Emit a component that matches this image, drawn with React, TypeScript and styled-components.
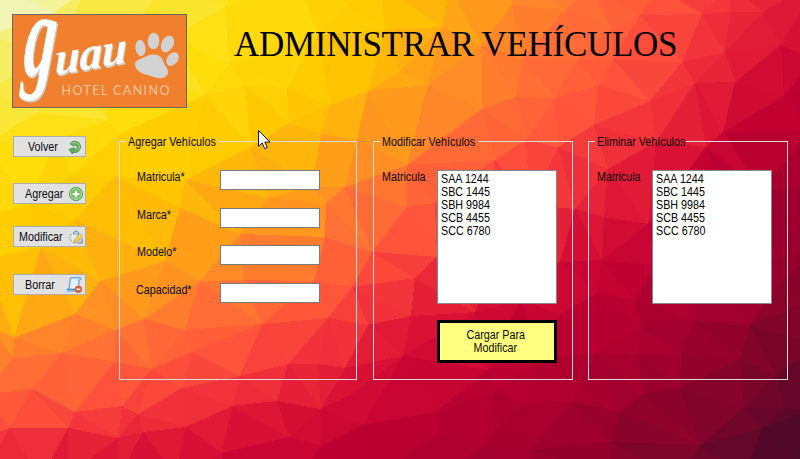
import React from 'react';
import styled, { createGlobalStyle } from 'styled-components';

const GlobalStyle = createGlobalStyle`
  * { box-sizing: border-box; }
  body { margin: 0; overflow: hidden; }
`;

/* ---------- Low-poly backdrop ---------- */

type Point = [number, number];

const POINTS: Point[] = [
  [-20, -20], [85, -10], [162, -12], [235, -15], [300, -12], [380, -15], [450, -12], [520, -20], [590, -15], [660, -12], [730, -15], [820, -20],
  [-15, 37], [-12, 90], [-15, 144], [-12, 215], [-15, 260], [-12, 325], [-15, 395], [-12, 435], [-20, 480],
  [68, 475], [40, 480], [118, 478], [175, 475], [222, 480], [300, 476], [370, 480], [440, 475], [530, 478], [610, 474], [680, 480], [745, 476], [820, 480],
  [815, 60], [812, 130], [820, 190], [815, 250], [812, 300], [820, 345], [812, 410],
  [55, 12], [60, 50], [110, 60], [172, 37], [225, 7], [205, 95], [318, 35], [229, 64], [245, 86], [287, 88], [347, 5], [330, 105], [368, 91],
  [37, 113], [107, 120], [55, 140], [120, 134], [72, 175], [115, 176], [185, 180], [289, 123], [251, 147], [321, 134], [357, 140],
  [268, 198], [312, 187], [345, 187], [326, 203], [180, 208], [325, 237], [240, 234], [30, 205], [75, 220], [400, 72], [385, 30], [442, 27],
  [512, 5], [565, 10], [612, 28], [640, 15], [702, 14], [730, 12], [763, 12], [725, 52], [781, 45], [682, 62], [695, 83], [735, 82],
  [650, 101], [599, 85], [555, 98], [516, 97], [482, 109], [428, 85], [482, 45], [522, 59], [577, 60], [613, 59],
  [594, 125], [526, 140], [495, 160], [558, 147], [706, 147], [723, 132], [784, 96], [407, 165], [608, 169], [575, 209],
  [604, 217], [648, 224], [656, 142], [407, 207], [435, 203], [500, 245], [530, 205], [760, 190], [775, 260], [730, 230], [690, 260],
  [41, 247], [100, 281], [14, 338], [13, 358], [75, 314], [62, 353], [115, 330], [144, 319], [115, 362], [152, 369], [32, 389], [75, 412],
  [122, 406], [138, 414], [118, 438], [68, 428], [10, 428], [185, 330], [192, 352], [240, 376], [182, 388], [186, 427],
  [232, 406], [143, 432], [222, 453], [288, 364], [328, 318], [277, 401], [321, 409], [352, 394], [318, 364], [345, 368], [363, 425], [321, 446],
  [289, 437], [200, 281], [165, 261], [244, 280], [262, 324], [352, 287], [368, 325], [372, 252], [314, 281],
  [437, 257], [415, 278], [411, 316], [403, 356], [436, 412], [438, 433], [496, 390], [487, 370], [524, 403], [573, 402], [620, 412],
  [642, 394], [680, 388], [700, 445], [744, 408], [762, 428], [740, 359], [681, 353], [638, 354], [641, 328], [694, 321], [597, 293], [635, 300],
  [655, 265], [595, 353], [543, 358], [485, 445], [530, 450], [610, 442], [602, 260], [560, 262], [560, 314],
  [750, 325], [785, 408], [775, 288], [775, 375], [475, 312], [520, 300],
];

const PALETTE: [number, number, number][] = [
  [240, 247, 196], [247, 236, 85], [255, 222, 12], [255, 198, 0], [255, 166, 20], [255, 138, 40], [255, 108, 54],
  [255, 82, 59], [241, 50, 59], [218, 18, 53], [192, 0, 50], [158, 0, 46], [122, 5, 42], [77, 9, 40],
];

const HEAT: number[][] = [
  [0, 1.1, 1.7, 2.2, 3.0, 4.7, 6.0, 7.6, 8.8],
  [1.2, 1.8, 2.1, 2.7, 4.0, 5.6, 6.9, 8.4, 10],
  [2.2, 2.7, 3.2, 4.0, 5.9, 7.2, 8.4, 9.7, 10.8],
  [3.0, 3.9, 4.7, 6.0, 7.7, 9.1, 9.7, 10.6, 11.5],
  [5.6, 6.3, 7.2, 8.2, 9.4, 10.1, 10.6, 11.3, 12.3],
  [8.3, 8.9, 9.4, 9.9, 10.4, 10.8, 11.4, 12.2, 13],
];

const clamp = (v: number, lo: number, hi: number) => Math.max(lo, Math.min(hi, v));

function heatAt(x: number, y: number) {
  const gx = clamp(x / 100, 0, 7.999);
  const gy = clamp(y / 91.8, 0, 4.999);
  const i = Math.floor(gx);
  const j = Math.floor(gy);
  const u = gx - i;
  const v = gy - j;
  const top = HEAT[j][i] * (1 - u) + HEAT[j][i + 1] * u;
  const bottom = HEAT[j + 1][i] * (1 - u) + HEAT[j + 1][i + 1] * u;
  return top * (1 - v) + bottom * v;
}

function paletteAt(t: number) {
  const c = clamp(t, 0, 12.999);
  const i = Math.floor(c);
  const f = c - i;
  const rgb = PALETTE[i].map((a, k) => Math.round(a + (PALETTE[i + 1][k] - a) * f));
  return `rgb(${rgb.join(',')})`;
}

function inCircumcircle(p: Point, a: Point, b: Point, c: Point) {
  const d = 2 * (a[0] * (b[1] - c[1]) + b[0] * (c[1] - a[1]) + c[0] * (a[1] - b[1]));
  if (Math.abs(d) < 1e-9) return false;
  const a2 = a[0] ** 2 + a[1] ** 2;
  const b2 = b[0] ** 2 + b[1] ** 2;
  const c2 = c[0] ** 2 + c[1] ** 2;
  const ux = (a2 * (b[1] - c[1]) + b2 * (c[1] - a[1]) + c2 * (a[1] - b[1])) / d;
  const uy = (a2 * (c[0] - b[0]) + b2 * (a[0] - c[0]) + c2 * (b[0] - a[0])) / d;
  return (p[0] - ux) ** 2 + (p[1] - uy) ** 2 < (a[0] - ux) ** 2 + (a[1] - uy) ** 2;
}

/* Bowyer-Watson Delaunay triangulation */
function triangulate(points: Point[]) {
  const n = points.length;
  const all: Point[] = [...points, [-5000, -4000], [6000, -4000], [400, 8000]];
  let tris: number[][] = [[n, n + 1, n + 2]];
  for (let p = 0; p < n; p++) {
    const bad = tris.filter(([a, b, c]) => inCircumcircle(all[p], all[a], all[b], all[c]));
    const edges = new Map<string, { e: number[]; count: number }>();
    bad.forEach(([a, b, c]) => {
      [[a, b], [b, c], [c, a]].forEach((e) => {
        const key = Math.min(e[0], e[1]) + '-' + Math.max(e[0], e[1]);
        const hit = edges.get(key);
        if (hit) hit.count++;
        else edges.set(key, { e, count: 1 });
      });
    });
    tris = tris.filter((t) => !bad.includes(t));
    edges.forEach(({ e, count }) => {
      if (count === 1) tris.push([e[0], e[1], p]);
    });
  }
  return tris.filter((t) => t.every((i) => i < n)).map((t) => t.map((i) => all[i]));
}

const FACETS = triangulate(POINTS).map((t) => {
  const cx = (t[0][0] + t[1][0] + t[2][0]) / 3;
  const cy = (t[0][1] + t[1][1] + t[2][1]) / 3;
  const noise = Math.abs(Math.sin(cx * 12.9898 + cy * 78.233) * 43758.5453) % 1;
  return {
    points: t.map((p) => p.join(',')).join(' '),
    color: paletteAt(heatAt(cx, cy) + (noise - 0.5) * 0.25),
  };
});

const Backdrop = styled.svg`
  position: absolute;
  inset: 0;
  z-index: -1;
`;

function LowPoly() {
  return (
    <Backdrop width="800" height="459" viewBox="0 0 800 459" shapeRendering="crispEdges">
      {FACETS.map((f, i) => (
        <polygon key={i} points={f.points} fill={f.color} />
      ))}
    </Backdrop>
  );
}

/* ---------- Layout ---------- */

const Window = styled.main`
  position: relative;
  z-index: 0;
  width: 800px;
  height: 459px;
  overflow: hidden;
  font: 12px/13px 'Liberation Sans', Arial, sans-serif;
  color: #0a0a0a;
`;

const Header = styled.header`
  display: flex;
  align-items: flex-start;
  height: 135px;
  padding: 14px 0 0 12px;
`;

const Logo = styled.svg`
  flex: none;
  width: 175px;
  height: 94px;
  overflow: visible;
`;

const Title = styled.h1`
  margin: 11px 0 0 47px;
  font: 400 35px/40px 'Liberation Serif', 'Times New Roman', serif;
  letter-spacing: -0.3px;
  color: #000;
  white-space: nowrap;
`;

const Body = styled.div`
  display: flex;
  align-items: flex-start;
  padding-left: 13px;
`;

const Sidebar = styled.nav`
  display: flex;
  flex-direction: column;
  width: 73px;
  margin: 1px 33px 0 0;
`;

const ToolButton = styled.button<{ $gap: number; $indent: number }>`
  display: flex;
  align-items: center;
  justify-content: space-between;
  width: 73px;
  height: 21px;
  margin: 0 0 ${(p) => p.$gap}px;
  padding: 1px 2px 0 ${(p) => p.$indent}px;
  border: 1px solid #adadad;
  background: #e1e1e1;
  color: #0a0a0a;
  font: inherit;

  svg { flex: none; }
`;

const Narrow = styled.span<{ $center?: boolean }>`
  display: inline-block;
  white-space: nowrap;
  transform: scaleX(0.895);
  transform-origin: ${(p) => (p.$center ? 'center' : 'left')};
`;

const Group = styled.fieldset<{ $width: number; $gap: number }>`
  width: ${(p) => p.$width}px;
  height: 245px;
  min-width: 0;
  margin: 0 ${(p) => p.$gap}px 0 0;
  padding: 0;
  border: 1px solid #dcdcdc;
`;

const Legend = styled.legend<{ $width: number }>`
  width: ${(p) => p.$width}px;
  height: 13px;
  margin-left: 6px;
  padding: 1px 0 0 2px;
`;

const Fields = styled.div`
  display: flex;
  flex-direction: column;
  padding: 22px 0 0 17px;
`;

const Field = styled.label<{ $gap: number }>`
  display: grid;
  grid-template-columns: 83px 100px;
  align-items: start;
  height: 20px;
  margin-bottom: ${(p) => p.$gap}px;
`;

const FieldLabel = styled(Narrow)<{ $shift?: number }>`
  margin: 1px 0 0 ${(p) => p.$shift ?? 0}px;
`;

/* Scaling a stretched grid item would pivot on its cell, so the label keeps its own width */
const PickerLabel = styled(FieldLabel)`
  justify-self: start;
`;

const TextInput = styled.input`
  width: 100px;
  height: 20px;
  padding: 0 3px;
  border: 1px solid #7a7a7a;
  border-radius: 0;
  background: #fff;
  font: inherit;
`;

const Picker = styled.div`
  display: grid;
  grid-template-columns: 55px 120px;
  row-gap: 16px;
  padding: 22px 0 0 8px;
`;

const ListBox = styled.ul`
  width: 120px;
  height: 134px;
  margin: 0;
  padding: 2px 3px;
  border: 1px solid #828790;
  background: #fff;
  list-style: none;
  color: #000;
`;

const ListItem = styled.li`
  height: 13px;
`;

const LoadButton = styled.button`
  grid-column: 2;
  display: flex;
  flex-direction: column;
  align-items: center;
  justify-content: center;
  height: 43px;
  padding: 0 3px 0 0;
  border: 3px solid #000;
  background: #ffff80;
  color: #0a0a0a;
  font: inherit;
`;

const Pointer = styled.svg`
  position: absolute;
  left: 258px;
  top: 130px;
`;

/* ---------- Icons ---------- */

const BackIcon = () => (
  <svg width="16" height="16" viewBox="0 0 16 16">
    <path d="M3 4.800C5 2 9.300 1.500 11.700 3.700c2.700 2.500 2.200 7-.8 8.900-1.500 1-3.300 1.200-4.900.7l-.6 1.700-3.200-4.500 5.200-1.700-.5 1.900c2 .5 3.500-.8 3.300-2.500C10 6.400 7.800 5.500 6.200 6.800z" fill="#67b45f" stroke="#358044" strokeWidth=".8" />
    <path d="M4.500 4.600c2.200-1.700 5.400-1.500 7 .6 1.500 2 1 4.500-.8 6" fill="none" stroke="#a7d79a" strokeWidth="1" />
  </svg>
);

const AddIcon = () => (
  <svg width="16" height="16" viewBox="0 0 16 16">
    <circle cx="8" cy="8" r="6.700" fill="#65b356" stroke="#4c9548" strokeWidth=".7" />
    <circle cx="8" cy="8" r="5.500" fill="#74c063" stroke="#c8e8c0" strokeWidth=".8" />
    <path d="M8 4.700v6.600M4.700 8h6.600" stroke="#fff" strokeWidth="2.200" />
  </svg>
);

const EditIcon = () => (
  <svg width="16" height="16" viewBox="0 0 16 16">
    <path d="M5.500 6V3.800Q8 .3 10.800 3.800V6" fill="#a9c9df" stroke="#5b8cb2" />
    <path d="M1.500 5.500h9L14 9v5H5l-3.500-4z" fill="#c9d0d5" stroke="#aab1b6" strokeWidth=".7" />
    <path d="M1.500 7.500h8M2 9.700h6M4.500 5v8M7 5v8" stroke="#f7f7f7" strokeWidth=".8" />
    <path d="M6 13.700l.6-2.800 5.700-6 2.100 1.900-5.700 6z" fill="#ffd35a" stroke="#d38a24" strokeWidth=".7" />
    <path d="M11 6.400L13 8.200" stroke="#fff1b0" />
    <path d="M14.300 9.500V14H10" fill="none" stroke="#777" strokeWidth=".8" />
  </svg>
);

const DeleteIcon = () => (
  <svg width="17" height="16" viewBox="0 0 17 16">
    <path d="M4.500.8h9.800c1.200 0 1 2-.3 2l-1.100.3V14H2.300C.2 14 .4 11.700 2 11.700h1z" fill="#cfe5fb" stroke="#4b8fc8" strokeWidth=".9" />
    <path d="M5.200 2.200h6.200L10.800 11H4.500z" fill="#e5f2ff" />
    <path d="M2 12.400h7" stroke="#3f87c7" strokeWidth="1.200" />
    <circle cx="12.400" cy="12.300" r="3.300" fill="#e5622a" stroke="#bd431c" strokeWidth=".6" />
    <path d="M10.400 12.300h4" stroke="#fff" strokeWidth="1.400" />
  </svg>
);

function GuauLogo() {
  const script = { fontFamily: 'Liberation Serif, serif', fontStyle: 'italic', fontWeight: 700 };
  const lettering = (fill: string) => (
    <g fill={fill} {...script}>
      <text transform="translate(10 61) rotate(2) skewX(-3) scale(.8 1.5)" fontSize="80">g</text>
      <text transform="translate(43 61) rotate(-10) skewX(-10)" fontSize="46" textLength="73" lengthAdjust="spacingAndGlyphs">uau</text>
    </g>
  );
  return (
    <Logo viewBox="0 0 175 94">
      <rect x=".5" y=".5" width="174" height="93" fill="#f0802d" stroke="#666" />
      <g transform="translate(1.200 1.800)">{lettering('#cfcac6')}</g>
      {lettering('#fff')}
      <g fill="#d2d2d2">
        <ellipse cx="128.500" cy="34" rx="5" ry="8.200" transform="rotate(-8 128.500 34)" />
        <ellipse cx="141.500" cy="27" rx="5.800" ry="8.300" transform="rotate(4 141.500 27)" />
        <ellipse cx="155.500" cy="30" rx="6" ry="8.700" transform="rotate(28 155.500 30)" />
        <ellipse cx="160.500" cy="45" rx="5.400" ry="7.600" transform="rotate(38 160.500 45)" />
        <path d="M125 46.500c4-2 6-2.500 10-4.500 6-3 14-1.500 16 4.500 1 5 5.500 7.500 5 12-1 6.500-9 6.500-14 4.500-6-2-15-3-18-9-1.300-3-1.300-6 1-7.500z" />
      </g>
      <text x="49.500" y="81" fontFamily="Lato, sans-serif" fontWeight="400" fontSize="12.500" textLength="108" fill="#f0c5a0">HOTEL CANINO</text>
    </Logo>
  );
}

/* ---------- Page ---------- */

const ACTIONS = [
  { text: 'Volver', indent: 14, gap: 26, Icon: BackIcon },
  { text: 'Agregar', indent: 11, gap: 22, Icon: AddIcon },
  { text: 'Modificar', indent: 5, gap: 27, Icon: EditIcon },
  { text: 'Borrar', indent: 11, gap: 0, Icon: DeleteIcon },
];

const FIELDS = [
  { text: 'Matricula*', gap: 18, shift: 0 },
  { text: 'Marca*', gap: 17, shift: 0 },
  { text: 'Modelo*', gap: 18, shift: 0 },
  { text: 'Capacidad*', gap: 0, shift: -1 },
];

const PLATES = ['SAA 1244', 'SBC 1445', 'SBH 9984', 'SCB 4455', 'SCC 6780'];

const PlateList = () => (
  <ListBox>
    {PLATES.map((p) => (
      <ListItem key={p}><Narrow>{p}</Narrow></ListItem>
    ))}
  </ListBox>
);

export default function App() {
  return (
    <Window>
      <GlobalStyle />
      <LowPoly />
      <Header>
        <GuauLogo />
        <Title>ADMINISTRAR VEHÍCULOS</Title>
      </Header>
      <Body>
        <Sidebar>
          {ACTIONS.map(({ text, indent, gap, Icon }) => (
            <ToolButton key={text} $gap={gap} $indent={indent}>
              <Narrow>{text}</Narrow>
              <Icon />
            </ToolButton>
          ))}
        </Sidebar>
        <Group $width={238} $gap={16}>
          <Legend $width={92}><Narrow>Agregar Vehículos</Narrow></Legend>
          <Fields>
            {FIELDS.map((f) => (
              <Field key={f.text} $gap={f.gap}>
                <FieldLabel $shift={f.shift}>{f.text}</FieldLabel>
                <TextInput />
              </Field>
            ))}
          </Fields>
        </Group>
        <Group $width={200} $gap={15}>
          <Legend $width={98}><Narrow>Modificar Vehículos</Narrow></Legend>
          <Picker>
            <PickerLabel>Matricula</PickerLabel>
            <PlateList />
            <LoadButton>
              <Narrow $center>Cargar Para</Narrow>
              <Narrow $center>Modificar</Narrow>
            </LoadButton>
          </Picker>
        </Group>
        <Group $width={200} $gap={0}>
          <Legend $width={91}><Narrow>Eliminar Vehículos</Narrow></Legend>
          <Picker>
            <PickerLabel>Matricula</PickerLabel>
            <PlateList />
          </Picker>
        </Group>
      </Body>
      <Pointer width="13" height="20" viewBox="0 0 13 20">
        <path d="M.5.5v16l3.700-3.500 2.500 5.700 2.500-1.100-2.400-5.500h5.200z" fill="#fff" stroke="#111" />
      </Pointer>
    </Window>
  );
}
